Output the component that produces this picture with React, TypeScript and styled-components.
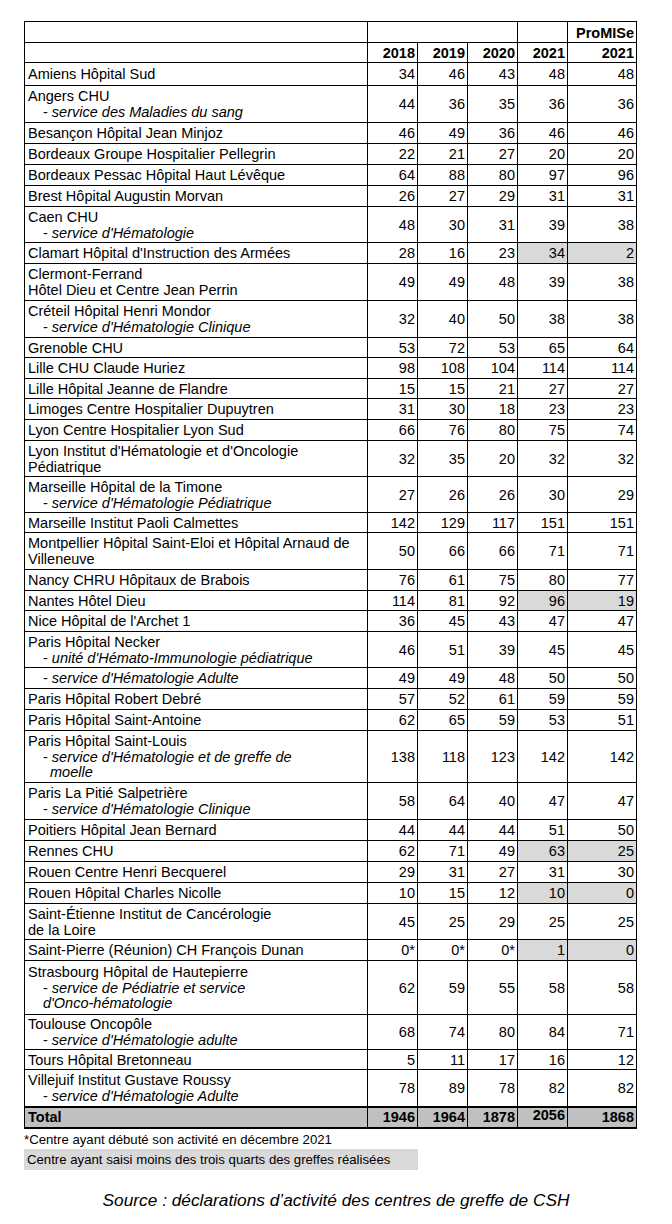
import React from "react";
import styled, { createGlobalStyle } from "styled-components";

const GlobalStyle = createGlobalStyle`
  html, body {
    margin: 0;
    padding: 0;
    background: #ffffff;
  }
  body {
    font-family: "Liberation Sans", Arial, sans-serif;
    color: #000000;
  }
`;

const Page = styled.div`
  width: 672px;
  padding: 21px 0 0 24px;
  box-sizing: border-box;
`;

const Table = styled.table`
  border-collapse: collapse;
  table-layout: fixed;
  width: 613px;
  font-size: 14.5px;
  line-height: 15.75px;
`;

const HeadCell = styled.th<{ $h: number }>`
  border: 1px solid #000;
  height: ${(p) => p.$h}px;
  padding: 0 2px 0 0;
  text-align: right;
  vertical-align: bottom;
  font-weight: bold;
  box-sizing: border-box;
`;

const Row = styled.tr<{ $h: number }>`
  height: ${(p) => p.$h}px;
`;

const NameCell = styled.td`
  border: 1px solid #000;
  padding: 2px 3px 0 3px;
  text-align: left;
  vertical-align: middle;
`;

const NumCell = styled.td<{ $shade?: boolean }>`
  border: 1px solid #000;
  padding: 2px 2px 0 0;
  text-align: right;
  vertical-align: middle;
  background: ${(p) => (p.$shade ? "#d9d9d9" : "transparent")};
`;

const TotalRow = styled.tr`
  height: 21px;
  background: #c0c0c0;
  font-weight: bold;
`;

const TotalName = styled.td`
  border: 1px solid #000;
  border-top-width: 2px;
  border-bottom-width: 2px;
  padding: 1px 3px 0 3px;
  text-align: left;
  vertical-align: middle;
`;

const TotalNum = styled.td<{ $lift?: boolean }>`
  border: 1px solid #000;
  border-top-width: 2px;
  border-bottom-width: 2px;
  padding: ${(p) => (p.$lift ? "0 2px 3px 0" : "1px 2px 0 0")};
  text-align: right;
  vertical-align: middle;
`;

const Line = styled.span`
  display: block;
  white-space: nowrap;
`;

const SubLine = styled.span<{ $indent: number }>`
  display: block;
  white-space: nowrap;
  padding-left: ${(p) => p.$indent}px;
`;

const Em = styled.i`
  font-style: italic;
`;

const Notes = styled.div`
  display: flex;
  flex-direction: column;
  align-items: flex-start;
  font-size: 13.2px;
  line-height: 15px;
`;

const Note = styled.div`
  padding: 3px 0 0 0;
`;

const ShadedNote = styled.div`
  margin-top: 2px;
  width: 394px;
  height: 21px;
  box-sizing: border-box;
  padding: 3px 0 0 3px;
  background: #d9d9d9;
`;

const Source = styled.div`
  width: 624px;
  margin-top: 21px;
  text-align: center;
  font-style: italic;
  font-size: 17.3px;
  line-height: 19px;
`;

type Part = { t: string; k: "main" | "sub" | "cont" | "wrap" };
type Entry = { name: Part[]; v: string[]; shade?: boolean; h: number };

const m = (t: string): Part => ({ t, k: "main" });
const s = (t: string): Part => ({ t, k: "sub" });
const c = (t: string): Part => ({ t, k: "cont" });
const w = (t: string): Part => ({ t, k: "wrap" });

const rows: Entry[] = [
  { name: [m("Amiens Hôpital Sud")], v: ["34", "46", "43", "48", "48"], h: 23 },
  { name: [m("Angers CHU"), s("service des Maladies du sang")], v: ["44", "36", "35", "36", "36"], h: 37 },
  { name: [m("Besançon Hôpital Jean Minjoz")], v: ["46", "49", "36", "46", "46"], h: 21 },
  { name: [m("Bordeaux Groupe Hospitalier Pellegrin")], v: ["22", "21", "27", "20", "20"], h: 21 },
  { name: [m("Bordeaux Pessac Hôpital Haut Lévêque")], v: ["64", "88", "80", "97", "96"], h: 21 },
  { name: [m("Brest Hôpital Augustin Morvan")], v: ["26", "27", "29", "31", "31"], h: 21 },
  { name: [m("Caen CHU"), s("service d'Hématologie")], v: ["48", "30", "31", "39", "38"], h: 36 },
  { name: [m("Clamart Hôpital d'Instruction des Armées")], v: ["28", "16", "23", "34", "2"], shade: true, h: 21 },
  { name: [m("Clermont-Ferrand"), m("Hôtel Dieu et Centre Jean Perrin")], v: ["49", "49", "48", "39", "38"], h: 37 },
  { name: [m("Créteil Hôpital Henri Mondor"), s("service d'Hématologie Clinique")], v: ["32", "40", "50", "38", "38"], h: 37 },
  { name: [m("Grenoble CHU")], v: ["53", "72", "53", "65", "64"], h: 20 },
  { name: [m("Lille CHU Claude Huriez")], v: ["98", "108", "104", "114", "114"], h: 21 },
  { name: [m("Lille Hôpital Jeanne de Flandre")], v: ["15", "15", "21", "27", "27"], h: 20 },
  { name: [m("Limoges Centre Hospitalier Dupuytren")], v: ["31", "30", "18", "23", "23"], h: 21 },
  { name: [m("Lyon Centre Hospitalier Lyon Sud")], v: ["66", "76", "80", "75", "74"], h: 21 },
  { name: [m("Lyon Institut d'Hématologie et d'Oncologie"), m("Pédiatrique")], v: ["32", "35", "20", "32", "32"], h: 36 },
  { name: [m("Marseille Hôpital de la Timone"), s("service d'Hématologie Pédiatrique")], v: ["27", "26", "26", "30", "29"], h: 36 },
  { name: [m("Marseille Institut Paoli Calmettes")], v: ["142", "129", "117", "151", "151"], h: 20 },
  { name: [m("Montpellier Hôpital Saint-Eloi et Hôpital Arnaud de"), m("Villeneuve")], v: ["50", "66", "66", "71", "71"], h: 37 },
  { name: [m("Nancy CHRU Hôpitaux de Brabois")], v: ["76", "61", "75", "80", "77"], h: 21 },
  { name: [m("Nantes Hôtel Dieu")], v: ["114", "81", "92", "96", "19"], shade: true, h: 20 },
  { name: [m("Nice Hôpital de l'Archet 1")], v: ["36", "45", "43", "47", "47"], h: 21 },
  { name: [m("Paris Hôpital Necker"), s("unité d'Hémato-Immunologie pédiatrique")], v: ["46", "51", "39", "45", "45"], h: 36 },
  { name: [s("service d'Hématologie Adulte")], v: ["49", "49", "48", "50", "50"], h: 21 },
  { name: [m("Paris Hôpital Robert Debré")], v: ["57", "52", "61", "59", "59"], h: 21 },
  { name: [m("Paris Hôpital Saint-Antoine")], v: ["62", "65", "59", "53", "51"], h: 21 },
  { name: [m("Paris Hôpital Saint-Louis"), s("service d'Hématologie et de greffe de"), c("moelle")], v: ["138", "118", "123", "142", "142"], h: 52 },
  { name: [m("Paris La Pitié Salpetrière"), s("service d'Hématologie Clinique")], v: ["58", "64", "40", "47", "47"], h: 37 },
  { name: [m("Poitiers Hôpital Jean Bernard")], v: ["44", "44", "44", "51", "50"], h: 21 },
  { name: [m("Rennes CHU")], v: ["62", "71", "49", "63", "25"], shade: true, h: 21 },
  { name: [m("Rouen Centre Henri Becquerel")], v: ["29", "31", "27", "31", "30"], h: 21 },
  { name: [m("Rouen Hôpital Charles Nicolle")], v: ["10", "15", "12", "10", "0"], shade: true, h: 21 },
  { name: [m("Saint-Étienne Institut de Cancérologie"), m("de la Loire")], v: ["45", "25", "29", "25", "25"], h: 36 },
  { name: [m("Saint-Pierre (Réunion) CH François Dunan")], v: ["0*", "0*", "0*", "1", "0"], shade: true, h: 21 },
  { name: [m("Strasbourg Hôpital de Hautepierre"), s("service de Pédiatrie et service"), w("d'Onco-hématologie")], v: ["62", "59", "55", "58", "58"], h: 54 },
  { name: [m("Toulouse Oncopôle"), s("service d'Hématologie adulte")], v: ["68", "74", "80", "84", "71"], h: 35 },
  { name: [m("Tours Hôpital Bretonneau")], v: ["5", "11", "17", "16", "12"], h: 20 },
  { name: [m("Villejuif Institut Gustave Roussy"), s("service d'Hématologie Adulte")], v: ["78", "89", "78", "82", "82"], h: 37 },
];

function NameLines({ parts }: { parts: Part[] }) {
  return (
    <>
      {parts.map((p, i) => {
        if (p.k === "main") return <Line key={i}>{p.t}</Line>;
        if (p.k === "sub")
          return (
            <SubLine key={i} $indent={15}>
              - <Em>{p.t}</Em>
            </SubLine>
          );
        if (p.k === "cont")
          return (
            <SubLine key={i} $indent={22}>
              <Em>{p.t}</Em>
            </SubLine>
          );
        return (
          <SubLine key={i} $indent={15}>
            <Em>{p.t}</Em>
          </SubLine>
        );
      })}
    </>
  );
}

export default function App() {
  return (
    <Page>
      <GlobalStyle />
      <Table>
        <colgroup>
          <col style={{ width: 343 }} />
          <col style={{ width: 50 }} />
          <col style={{ width: 50 }} />
          <col style={{ width: 50 }} />
          <col style={{ width: 50 }} />
          <col style={{ width: 69 }} />
        </colgroup>
        <thead>
          <tr>
            <HeadCell $h={21}></HeadCell>
            <HeadCell $h={21} colSpan={3}></HeadCell>
            <HeadCell $h={21}></HeadCell>
            <HeadCell $h={21}>ProMISe</HeadCell>
          </tr>
          <tr>
            <HeadCell $h={20}></HeadCell>
            <HeadCell $h={20}>2018</HeadCell>
            <HeadCell $h={20}>2019</HeadCell>
            <HeadCell $h={20}>2020</HeadCell>
            <HeadCell $h={20}>2021</HeadCell>
            <HeadCell $h={20}>2021</HeadCell>
          </tr>
        </thead>
        <tbody>
          {rows.map((r, i) => (
            <Row key={i} $h={r.h}>
              <NameCell>
                <NameLines parts={r.name} />
              </NameCell>
              {r.v.map((v, j) => (
                <NumCell key={j} $shade={r.shade && j >= 3}>
                  {v}
                </NumCell>
              ))}
            </Row>
          ))}
          <TotalRow>
            <TotalName>Total</TotalName>
            <TotalNum>1946</TotalNum>
            <TotalNum>1964</TotalNum>
            <TotalNum>1878</TotalNum>
            <TotalNum $lift>2056</TotalNum>
            <TotalNum>1868</TotalNum>
          </TotalRow>
        </tbody>
      </Table>
      <Notes>
        <Note>*Centre ayant débuté son activité en décembre 2021</Note>
        <ShadedNote>Centre ayant saisi moins des trois quarts des greffes réalisées</ShadedNote>
      </Notes>
      <Source>Source : déclarations d’activité des centres de greffe de CSH</Source>
    </Page>
  );
}
